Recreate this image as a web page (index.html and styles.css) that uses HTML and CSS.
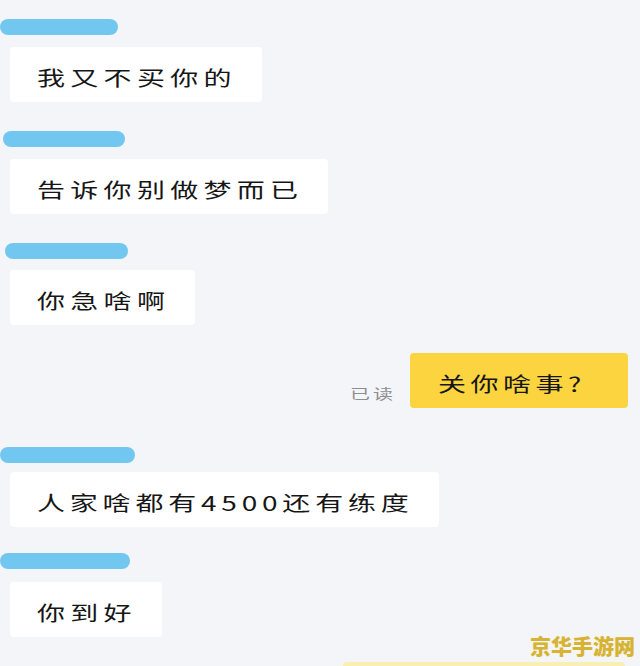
FILE: index.html
```html
<!DOCTYPE html>
<html lang="zh">
<head>
<meta charset="utf-8">
<link rel="stylesheet" href="styles.css">
</head>
<body>
<div class="chat">
  <div class="msg in first">
    <div class="name" style="width:118px;margin-left:0"></div>
    <div class="bubble"><span class="t">我又不买你的</span></div>
  </div>
  <div class="msg in g2">
    <div class="name" style="width:122px;margin-left:3px"></div>
    <div class="bubble"><span class="t">告诉你别做梦而已</span></div>
  </div>
  <div class="msg in g3">
    <div class="name" style="width:123px;margin-left:5px"></div>
    <div class="bubble"><span class="t">你急啥啊</span></div>
  </div>
  <div class="msg out">
    <span class="read">已读</span>
    <div class="bubble yellow"><span class="t">关你啥事?</span></div>
  </div>
  <div class="msg in g4">
    <div class="name" style="width:135px;margin-left:0"></div>
    <div class="bubble"><span class="t tight">人家啥都有4500还有练度</span></div>
  </div>
  <div class="msg in g5">
    <div class="name" style="width:130px;margin-left:0"></div>
    <div class="bubble"><span class="t">你到好</span></div>
  </div>
  <div class="msg out next">
    <div class="bubble pale"></div>
  </div>
</div>
<div class="watermark">京华手游网</div>
</body>
</html>
```

FILE: styles.css
```css
html, body {
  margin: 0;
  padding: 0;
  height: 666px;
  overflow: hidden;
}
body {
  background: #f4f5f9;
  font-family: "Noto Sans CJK SC", "Noto Sans", sans-serif;
  color: #161616;
  position: relative;
}
.chat {
  display: flex;
  flex-direction: column;
  padding-top: 19px;
}
.msg {
  display: flex;
}
.msg.in {
  flex-direction: column;
  align-items: flex-start;
}
.msg.g2 { margin-top: 29px; }
.msg.g3 { margin-top: 29px; }
.msg.g4 { margin-top: 39px; }
.msg.g5 { margin-top: 26px; }
.name {
  height: 16px;
  border-radius: 8px;
  background: #72c7f1;
}
.bubble {
  margin-top: 12px;
  margin-left: 10px;
  height: 55px;
  box-sizing: border-box;
  padding: 4px 25px 0 27px;
  display: flex;
  align-items: center;
  background: #ffffff;
  border-radius: 4px;
  white-space: nowrap;
}
.g3 .bubble { margin-top: 11px; }
.g4 .bubble { margin-top: 9px; }
.g5 .bubble { margin-top: 13px; }
.t {
  display: inline-block;
  font-size: 28px;
  font-weight: 400;
  line-height: 30px;
  letter-spacing: 5.3px;
  transform: scaleY(0.72);
}
.t.tight {
  letter-spacing: 4.8px;
}
.msg.out {
  justify-content: flex-end;
  align-items: center;
  margin-top: 28px;
  padding-right: 12px;
}
.msg.out .bubble {
  margin: 0;
}
.read {
  font-size: 20px;
  line-height: 22px;
  color: #8e8e8e;
  letter-spacing: 3px;
  margin-right: 14px;
  margin-top: 26px;
  transform: scaleY(0.66);
}
.bubble.yellow {
  background: #fbd43f;
  width: 218px;
  padding-left: 28px;
}
.bubble.yellow .t {
  letter-spacing: 4.5px;
}
.msg.out.next {
  margin-top: 25px;
  padding-right: 15px;
}
.bubble.pale {
  width: 282px;
  background: #faeeb3;
}
.watermark {
  position: absolute;
  right: 5px;
  bottom: 6px;
  font-size: 21px;
  font-weight: 900;
  color: #d7b335;
  letter-spacing: 0;
  text-shadow: 0 0 1px #f6edc5;
}
```
